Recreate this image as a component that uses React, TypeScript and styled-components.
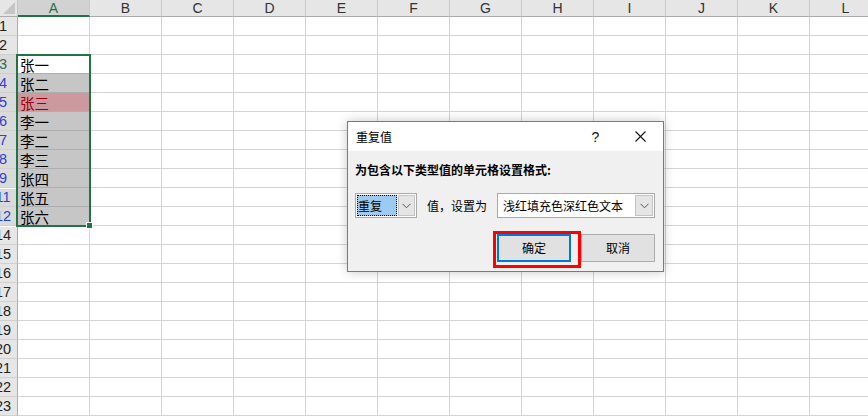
import React from "react";
import styled, { createGlobalStyle } from "styled-components";

const GlobalStyle = createGlobalStyle`
  html, body { margin: 0; padding: 0; background: #fff; overflow: hidden; }
  body { font-family: "Liberation Sans", "Noto Sans CJK SC", sans-serif; }
`;

const Page = styled.div`
  position: relative;
  width: 868px;
  height: 417px;
  overflow: hidden;
  background: #fff;
`;

const Sheet = styled.div`
  display: grid;
  grid-template-columns: 18px repeat(12, 72px);
  grid-template-rows: 17px;
  grid-auto-rows: 19px;
  width: max-content;
`;

const Corner = styled.div`
  box-sizing: border-box;
  background: #e6e6e6;
  border-right: 1px solid #c6c6c6;
  border-bottom: 1px solid #ababab;
  display: flex;
  align-items: flex-end;
  justify-content: flex-end;
  padding: 0 2px 2px 0;
`;

const ColHeader = styled.div<{ $selected?: boolean }>`
  box-sizing: border-box;
  background: ${(p) => (p.$selected ? "#d2d2d2" : "#e6e6e6")};
  border-right: 1px solid #c8c8c8;
  border-bottom: ${(p) => (p.$selected ? "2px solid #217346" : "1px solid #ababab")};
  color: ${(p) => (p.$selected ? "#217346" : "#333")};
  font-family: "Liberation Sans", sans-serif;
  font-size: 14px;
  line-height: 16px;
  text-align: center;
`;

const RowHeader = styled.div<{ $selected?: boolean; $afterHidden?: boolean }>`
  box-sizing: border-box;
  background: ${(p) => (p.$selected ? "#dadada" : "#e6e6e6")};
  border-right: 1px solid #ababab;
  border-bottom: 1px solid #d0d0d0;
  box-shadow: ${(p) => (p.$afterHidden ? "inset 0 1px 0 #ffffff" : "none")};
  overflow: hidden;
  font-family: "Liberation Sans", sans-serif;
  font-size: 14.5px;
  line-height: 19px;
`;

const RowLabel = styled.span<{ $tone: string }>`
  display: block;
  width: 28px;
  margin-left: -11px;
  text-align: center;
  color: ${(p) => p.$tone};
`;

const Cell = styled.div<{ $fill?: string; $ink?: string; $inSel?: boolean }>`
  box-sizing: border-box;
  background: ${(p) => p.$fill || "#fff"};
  border-right: 1px solid #d4d4d4;
  border-bottom: 1px solid ${(p) => (p.$inSel ? "#aeaeae" : "#d4d4d4")};
  color: ${(p) => p.$ink || "#000"};
  font-family: "Noto Sans CJK SC", "Liberation Sans", sans-serif;
  font-size: 14.5px;
  line-height: 15px;
  padding: 2px 0 0 2px;
  white-space: nowrap;
`;

const SelectionFrame = styled.div`
  position: absolute;
  left: 16px;
  top: 54px;
  width: 75px;
  height: 173px;
  box-sizing: border-box;
  border: 2px solid #217346;
  pointer-events: none;
`;

const FillHandle = styled.div`
  position: absolute;
  right: -4px;
  bottom: -4px;
  width: 5px;
  height: 5px;
  background: #217346;
  border: 1px solid #fff;
`;

/* Dialog */
const Dialog = styled.div`
  position: absolute;
  left: 347px;
  top: 121px;
  width: 317px;
  box-sizing: border-box;
  border: 1px solid #7a7a7a;
  background: #f0f0f0;
  box-shadow: 0 0 10px rgba(0, 0, 0, 0.22);
  font-family: "Noto Sans CJK SC", "Liberation Sans", sans-serif;
  font-size: 12px;
  color: #000;
`;

const TitleBar = styled.div`
  display: flex;
  align-items: center;
  height: 29px;
  background: #fff;
  padding-left: 8px;
`;

const TitleText = styled.div`
  flex: 1;
  font-size: 12px;
  line-height: 16px;
`;

const TitleButton = styled.div`
  width: 45px;
  height: 29px;
  display: flex;
  align-items: center;
  justify-content: center;
  font-family: "Liberation Sans", sans-serif;
  font-size: 14px;
  color: #111;
`;

const Body = styled.div`
  padding: 11px 7px 9px 7px;
  display: flex;
  flex-direction: column;
`;

const Prompt = styled.div`
  font-weight: 700;
  line-height: 16px;
`;

const FormRow = styled.div`
  display: flex;
  align-items: center;
  gap: 10px;
  margin-top: 15px;
`;

const Combo = styled.div<{ $w: number }>`
  box-sizing: border-box;
  width: ${(p) => p.$w}px;
  height: 25px;
  border: 1px solid #a9a9a9;
  background: #fff;
  padding: 1px;
  display: flex;
`;

const ComboField = styled.div<{ $focused?: boolean }>`
  flex: 1;
  box-sizing: border-box;
  display: flex;
  align-items: center;
  padding-left: ${(p) => (p.$focused ? "1px" : "4px")};
  background: ${(p) => (p.$focused ? "#9ccaf0" : "#fff")};
  outline: ${(p) => (p.$focused ? "1px dotted #000" : "none")};
  outline-offset: -1px;
  margin-right: 1px;
  line-height: 16px;
  white-space: nowrap;
`;

const ComboButton = styled.div<{ $w: number }>`
  box-sizing: border-box;
  width: ${(p) => p.$w}px;
  background: #e5e5e5;
  border: 1px solid #c4c4c4;
  display: flex;
  align-items: center;
  justify-content: center;
`;

const InlineLabel = styled.div`
  width: 60px;
  white-space: nowrap;
  line-height: 16px;
`;

const ButtonRow = styled.div`
  display: flex;
  justify-content: flex-end;
  gap: 10px;
  margin-top: 16px;
  padding-right: 1px;
`;

const ButtonWrap = styled.div`
  position: relative;
`;

const DialogButton = styled.div<{ $focused?: boolean }>`
  box-sizing: border-box;
  width: 74px;
  height: 28px;
  display: flex;
  align-items: center;
  justify-content: center;
  background: #e1e1e1;
  border: ${(p) => (p.$focused ? "2px solid #0078d7" : "1px solid #adadad")};
  line-height: 16px;
`;

const Highlight = styled.div`
  position: absolute;
  top: -3px;
  left: -4px;
  right: -10px;
  bottom: -6px;
  border: 3px solid #ff0000;
  pointer-events: none;
`;

const Chevron = () => (
  <svg width="9" height="6" viewBox="0 0 9 6">
    <polyline points="0.5,0.8 4.5,4.8 8.5,0.8" fill="none" stroke="#555" strokeWidth="1" />
  </svg>
);

const CloseIcon = () => (
  <svg width="11" height="11" viewBox="0 0 11 11">
    <line x1="0.5" y1="0.5" x2="10.5" y2="10.5" stroke="#111" strokeWidth="1.1" />
    <line x1="10.5" y1="0.5" x2="0.5" y2="10.5" stroke="#111" strokeWidth="1.1" />
  </svg>
);

const SelectAllMark = () => (
  <svg width="12" height="12" viewBox="0 0 12 12">
    <polygon points="0,12 12,12 12,0" fill="#c6c6c6" />
  </svg>
);

const COLS = ["A", "B", "C", "D", "E", "F", "G", "H", "I", "J", "K", "L"];
const ROWS = [1, 2, 3, 4, 5, 6, 7, 8, 9, 11, 12, 14, 15, 16, 17, 18, 19, 20, 21, 22, 23];
const DATA: Record<number, { text: string; fill?: string; ink?: string }> = {
  3: { text: "张一" },
  4: { text: "张二", fill: "#c6c6c6" },
  5: { text: "张三", fill: "#cc999e", ink: "#9c0006" },
  6: { text: "李一", fill: "#c6c6c6" },
  7: { text: "李二", fill: "#c6c6c6" },
  8: { text: "李三", fill: "#c6c6c6" },
  9: { text: "张四", fill: "#c6c6c6" },
  11: { text: "张五", fill: "#c6c6c6" },
  12: { text: "张六", fill: "#c6c6c6" },
};

export default function App() {
  return (
    <Page>
      <GlobalStyle />
      <Sheet>
        <Corner>
          <SelectAllMark />
        </Corner>
        {COLS.map((c) => (
          <ColHeader key={c} $selected={c === "A"}>
            {c}
          </ColHeader>
        ))}
        {ROWS.map((r) => {
          const selected = r >= 3 && r <= 12;
          const tone = r === 3 ? "#23705a" : selected ? "#2a3fd4" : "#222";
          const d = DATA[r];
          return (
            <React.Fragment key={r}>
              <RowHeader $selected={selected} $afterHidden={r === 11 || r === 14}>
                <RowLabel $tone={tone}>{r}</RowLabel>
              </RowHeader>
              {COLS.map((c) =>
                c === "A" ? (
                  <Cell key={c} $fill={d?.fill} $ink={d?.ink} $inSel={selected && r !== 12}>
                    {d?.text}
                  </Cell>
                ) : (
                  <Cell key={c} />
                )
              )}
            </React.Fragment>
          );
        })}
      </Sheet>

      <SelectionFrame>
        <FillHandle />
      </SelectionFrame>

      <Dialog>
        <TitleBar>
          <TitleText>重复值</TitleText>
          <TitleButton>?</TitleButton>
          <TitleButton>
            <CloseIcon />
          </TitleButton>
        </TitleBar>
        <Body>
          <Prompt>为包含以下类型值的单元格设置格式:</Prompt>
          <FormRow>
            <Combo $w={62}>
              <ComboField $focused>重复</ComboField>
              <ComboButton $w={17}>
                <Chevron />
              </ComboButton>
            </Combo>
            <InlineLabel>值，设置为</InlineLabel>
            <Combo $w={158}>
              <ComboField>浅红填充色深红色文本</ComboField>
              <ComboButton $w={18}>
                <Chevron />
              </ComboButton>
            </Combo>
          </FormRow>
          <ButtonRow>
            <ButtonWrap>
              <DialogButton $focused>确定</DialogButton>
              <Highlight />
            </ButtonWrap>
            <DialogButton>取消</DialogButton>
          </ButtonRow>
        </Body>
      </Dialog>
    </Page>
  );
}
